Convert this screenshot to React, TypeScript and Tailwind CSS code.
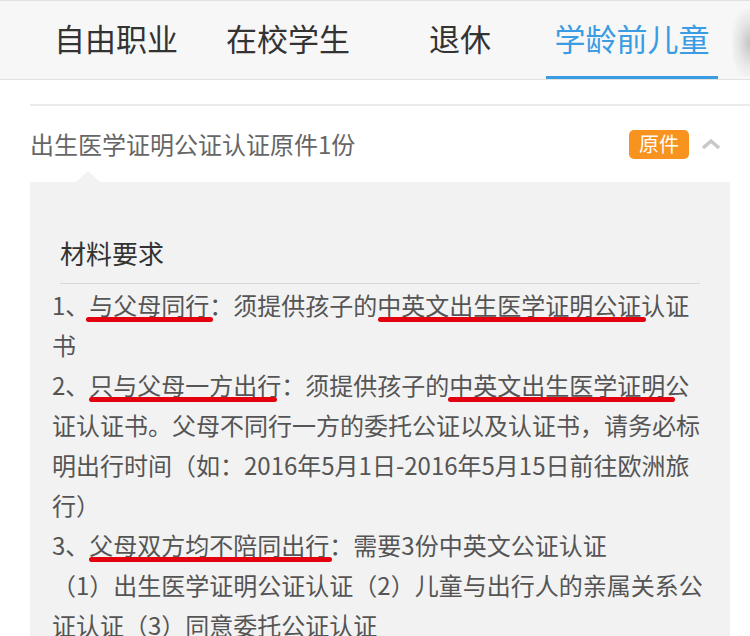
const tabs = ["自由职业", "在校学生", "退休", "学龄前儿童"];

function Mark({ children, bar }: { children: React.ReactNode; bar: string }) {
  return (
    <span className="relative">
      {children}
      <span className={`absolute top-[30px] h-[5px] rounded-full bg-[#e3000f] ${bar}`} />
    </span>
  );
}

export default function App() {
  return (
    <div className="h-[636px] w-[750px] overflow-hidden bg-white font-['Noto_Sans_CJK_SC',sans-serif]">
      {/* Tabs */}
      <div className="relative flex h-[80px] border-y border-[#e2e2e2] bg-[#f7f7f7] pl-[30px]">
        {tabs.map((t, i) => (
          <div
            key={t}
            className={`relative flex w-[172px] items-center justify-center pb-[4px] text-[31px] ${
              i === 3 ? "text-[#3a9ce2]" : "text-[#333]"
            }`}
          >
            {t}
            {i === 3 && (
              <span className="absolute bottom-0 left-0 right-0 h-[3px] bg-[#3a9ce2]" />
            )}
          </div>
        ))}
        <div className="absolute bottom-[2px] right-0 top-[8px] w-[18px] bg-[radial-gradient(ellipse_at_right,#c4c4c4_0%,#e6e6e6_45%,transparent_80%)]" />
      </div>

      <div className="ml-[30px] mt-[24px] h-[2px] bg-[#ebebeb]" />

      {/* Item header */}
      <div className="flex h-[76px] items-center pl-[30px] pr-[29px]">
        <span className="flex-1 text-[24px] text-[#666]">出生医学证明公证认证原件1份</span>
        <span className="flex h-[29px] w-[60px] items-center justify-center rounded-[5px] bg-[#f7931e] text-[20px] text-white">
          原件
        </span>
        <svg className="ml-[12px]" width="20" height="12" viewBox="0 0 20 12">
          <polyline points="2,10 10,3 18,10" fill="none" stroke="#c8c8c8" strokeWidth="3.5" />
        </svg>
      </div>

      {/* Details panel */}
      <div className="relative ml-[30px] w-[700px] bg-[#f2f2f2] px-[22px] pt-[51px]">
        <span className="absolute -top-[11px] left-[46px] border-x-[12px] border-b-[11px] border-x-transparent border-b-[#f2f2f2]" />
        <div className="mx-[8px] text-[26px] leading-[40px] text-[#333]">材料要求</div>
        <div className="mx-[8px] mt-[10px] h-px bg-[#d8d8d8]" />
        <div className="mt-[1px] w-[656px] text-[24px] leading-[40px] text-[#555]">
          <p>
            1、<Mark bar="-left-[3px] w-[127px]">与父母同行</Mark>：须提供孩子的
            <Mark bar="left-[1px] w-[268px]">中英文出生医学证明公证认证</Mark>书
          </p>
          <p>
            2、<Mark bar="left-0 w-[188px]">只与父母一方出行</Mark>：须提供孩子的
            <Mark bar="-left-[1px] w-[227px]">中英文出生医学证明</Mark>公证认证书。父母不同行一方的委托公证以及认证书，请务必标明出行时间（如：2016年5月1日-2016年5月15日前往欧洲旅行）
          </p>
          <p>
            3、<Mark bar="left-0 w-[243px]">父母双方均不陪同出行</Mark>：需要3份中英文公证认证
          </p>
          <p>（1）出生医学证明公证认证（2）儿童与出行人的亲属关系公证认证（3）同意委托公证认证</p>
        </div>
      </div>
    </div>
  );
}
